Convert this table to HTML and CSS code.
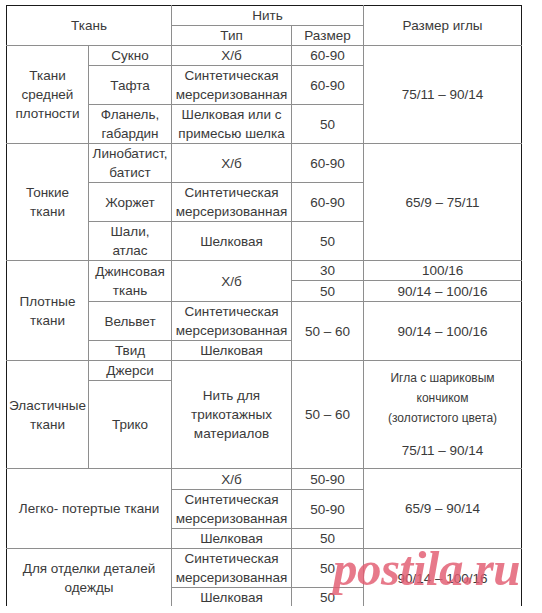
FILE: index.html
```html
<!DOCTYPE html>
<html lang="ru">
<head>
<meta charset="utf-8">
<link rel="stylesheet" href="styles.css">
</head>
<body>
<div class="frame">
<table class="fabric">
  <colgroup>
    <col class="c1"><col class="c2"><col class="c3"><col class="c4"><col class="c5">
  </colgroup>
  <tr class="h20">
    <td colspan="2" rowspan="2" class="head">Ткань</td>
    <td colspan="2" class="head">Нить</td>
    <td rowspan="2" class="head">Размер иглы</td>
  </tr>
  <tr class="h20">
    <td>Тип</td>
    <td>Размер</td>
  </tr>

  <tr class="h20">
    <td rowspan="3">Ткани<br>средней<br>плотности</td>
    <td>Сукно</td>
    <td>Х/б</td>
    <td>60-90</td>
    <td rowspan="3">75/11 – 90/14</td>
  </tr>
  <tr class="h39">
    <td>Тафта</td>
    <td>Синтетическая<br>мерсеризованная</td>
    <td>60-90</td>
  </tr>
  <tr class="h39">
    <td>Фланель,<br>габардин</td>
    <td>Шелковая или с<br>примесью шелка</td>
    <td>50</td>
  </tr>

  <tr class="h39">
    <td rowspan="3">Тонкие<br>ткани</td>
    <td>Линобатист,<br>батист</td>
    <td>Х/б</td>
    <td>60-90</td>
    <td rowspan="3">65/9 – 75/11</td>
  </tr>
  <tr class="h39">
    <td>Жоржет</td>
    <td>Синтетическая<br>мерсеризованная</td>
    <td>60-90</td>
  </tr>
  <tr class="h38">
    <td>Шали,<br>атлас</td>
    <td>Шелковая</td>
    <td>50</td>
  </tr>

  <tr class="h19">
    <td rowspan="4">Плотные<br>ткани</td>
    <td rowspan="2">Джинсовая<br>ткань</td>
    <td rowspan="2">Х/б</td>
    <td>30</td>
    <td>100/16</td>
  </tr>
  <tr class="h21">
    <td>50</td>
    <td>90/14 – 100/16</td>
  </tr>
  <tr class="h39">
    <td>Вельвет</td>
    <td>Синтетическая<br>мерсеризованная</td>
    <td rowspan="2">50 – 60</td>
    <td rowspan="2">90/14 – 100/16</td>
  </tr>
  <tr class="h20">
    <td>Твид</td>
    <td>Шелковая</td>
  </tr>

  <tr class="h20">
    <td rowspan="2">Эластичные<br>ткани</td>
    <td>Джерси</td>
    <td rowspan="2">Нить для<br>трикотажных<br>материалов</td>
    <td rowspan="2">50 – 60</td>
    <td rowspan="2" class="needle">
      <span class="small">Игла с шариковым<br>кончиком<br>(золотистого цвета)</span>
      <span class="size">75/11 – 90/14</span>
    </td>
  </tr>
  <tr class="h88">
    <td>Трико</td>
  </tr>

  <tr class="h21">
    <td colspan="2" rowspan="3">Легко- потертые ткани</td>
    <td>Х/б</td>
    <td>50-90</td>
    <td rowspan="3">65/9 – 90/14</td>
  </tr>
  <tr class="h39">
    <td>Синтетическая<br>мерсеризованная</td>
    <td>50-90</td>
  </tr>
  <tr class="h20">
    <td>Шелковая</td>
    <td>50</td>
  </tr>

  <tr class="h39">
    <td colspan="2" rowspan="2">Для отделки деталей<br>одежды</td>
    <td>Синтетическая<br>мерсеризованная</td>
    <td>50</td>
    <td rowspan="2">90/14 – 100/16</td>
  </tr>
  <tr class="h20">
    <td>Шелковая</td>
    <td>50</td>
  </tr>
</table>
</div>
<div class="watermark">postila.ru</div>
</body>
</html>
```

FILE: styles.css
```css
html, body {
  margin: 0;
  padding: 0;
  background: #ffffff;
}

body {
  position: relative;
  width: 542px;
  height: 613px;
  overflow: hidden;
  font-family: "Liberation Sans", Arial, sans-serif;
  font-size: 13.5px;
  color: #3a3a3a;
}

.frame {
  margin: 5px 0 0 6px;
  height: 601px;
  overflow: hidden;
}

.fabric {
  border-collapse: collapse;
  table-layout: fixed;
  width: 515px;
  border: 1px solid #1a1a1a;
}

.c1 { width: 82px; }
.c2 { width: 83px; }
.c3 { width: 120px; }
.c4 { width: 72px; }
.c5 { width: 158px; }

.fabric td {
  border: 1px solid #8e8e8e;
  padding: 0;
  text-align: center;
  vertical-align: middle;
  line-height: 19px;
  white-space: nowrap;
  overflow: hidden;
}

.fabric tr > td:first-child { border-left-color: #1a1a1a; }
.fabric tr:first-child > td { border-top-color: #1a1a1a; }
.fabric td:last-child { border-right-color: #1a1a1a; }

.h19 { height: 19px; }
.h20 { height: 20px; }
.h21 { height: 21px; }
.h38 { height: 38px; }
.h39 { height: 39px; }
.h88 { height: 88px; }

.needle .small {
  display: block;
  font-size: 12px;
  line-height: 20px;
}

.needle .size {
  display: block;
  margin-top: 13px;
  line-height: 20px;
}

.watermark {
  position: absolute;
  left: 333px;
  top: 539px;
  font-family: "Liberation Serif", "Times New Roman", serif;
  font-weight: bold;
  font-style: italic;
  font-size: 49px;
  line-height: 60px;
  color: rgba(226, 92, 112, 0.82);
  letter-spacing: -0.5px;
}
```
